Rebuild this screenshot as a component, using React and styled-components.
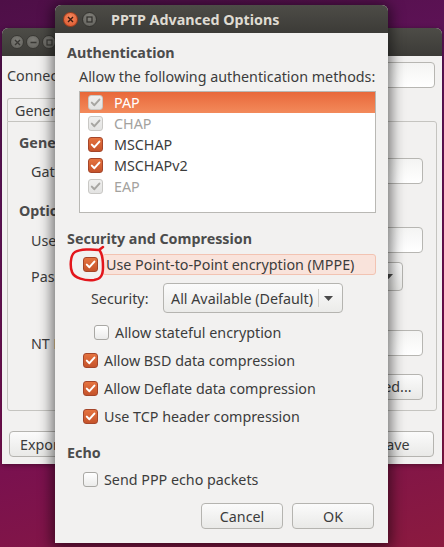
import styled, { createGlobalStyle, css } from "styled-components";

const GlobalStyle = createGlobalStyle`
  html, body { margin: 0; padding: 0; }
  body {
    width: 444px;
    height: 547px;
    overflow: hidden;
    font-family: "Noto Sans", "DejaVu Sans", sans-serif;
    font-size: 14.3px;
    color: #3c3c3c;
  }
`;

const Desktop = styled.div`
  position: relative;
  width: 444px;
  height: 547px;
  overflow: hidden;
  background: linear-gradient(165deg, #4e0f47 0%, #62135a 30%, #760f52 65%, #8b1a3f 100%);
`;

const Window = styled.div`
  position: absolute;
  left: ${p => p.$x}px;
  top: ${p => p.$y}px;
  width: ${p => p.$w}px;
  height: ${p => p.$h}px;
  background: #f2f1f0;
  border-radius: 6px 6px 0 0;
  display: flex;
  flex-direction: column;
  overflow: hidden;
  box-shadow: ${p => p.$active
    ? "0 2px 14px 3px rgba(0, 0, 0, 0.55)"
    : "0 1px 5px rgba(0, 0, 0, 0.4)"};
`;

const TitleBar = styled.div`
  height: 28px;
  flex-shrink: 0;
  display: flex;
  align-items: center;
  padding-left: 8px;
  gap: ${p => p.$gap}px;
  background: linear-gradient(#4d4c47, #3c3b37);
  color: #dfdbd2;
  font-weight: bold;
  font-size: 14.3px;
`;

const Title = styled.span`
  margin-left: 10px;
  white-space: nowrap;
`;

const WinButton = styled.span`
  width: 15px;
  height: 15px;
  box-sizing: border-box;
  border-radius: 50%;
  display: flex;
  align-items: center;
  justify-content: center;
  ${p => p.$close
    ? css`
        background: radial-gradient(circle at 50% 35%, #f68a5e, #d9532b);
        border: 1px solid #9e3d1d;
      `
    : css`
        background: radial-gradient(circle at 50% 35%, #85847e, #5d5c57);
        border: 1px solid #34332f;
      `}
`;

const DimButton = styled(WinButton)`
  width: 14px;
  height: 14px;
  background: radial-gradient(circle at 50% 35%, #7c7b76, #62615c);
  border: 1px solid #3a3935;
`;

/* ---------- generic widgets ---------- */

const Entry = styled.div`
  flex: 1;
  height: ${p => p.$h || 26}px;
  box-sizing: border-box;
  border: 1px solid #b7b6b2;
  border-radius: 4px;
  background: linear-gradient(#f4f4f3, #ffffff);
`;

const PushButton = styled.div`
  width: ${p => p.$w}px;
  height: 26px;
  box-sizing: border-box;
  border: 1px solid #b5b4b0;
  border-radius: 4px;
  background: linear-gradient(#fbfbfb, #e9e9e7);
  display: flex;
  align-items: center;
  justify-content: ${p => p.$align || "center"};
  padding: 0 ${p => p.$pad || 0}px;
  color: #3c3c3c;
  white-space: nowrap;
  overflow: hidden;
`;

const Combo = styled.div`
  width: ${p => p.$w}px;
  height: ${p => p.$h}px;
  box-sizing: border-box;
  border: 1px solid #b5b4b0;
  border-radius: 4px;
  background: linear-gradient(#fbfbfb, #ebebe9);
  display: flex;
  align-items: center;
  padding-left: 7px;
  white-space: nowrap;
`;

const ComboText = styled.span`
  flex: 1;
`;

const ComboSep = styled.span`
  width: 1px;
  align-self: stretch;
  margin: 5px 0;
  background: #cfceca;
`;

const ComboArrow = styled.span`
  width: 18px;
  margin-right: 5px;
  display: flex;
  justify-content: center;
`;

const Arrow = () => (
  <svg width="9" height="5" viewBox="0 0 9 5">
    <path d="M0 0 L9 0 L4.5 5 Z" fill="#4a4a4a" />
  </svg>
);

const checkStates = {
  on: css`
    background: linear-gradient(#e5733f, #c5532b);
    border: 1px solid #a5462a;
  `,
  off: css`
    background: linear-gradient(#ffffff, #ebebea);
    border: 1px solid #a9a8a4;
  `,
  dim: css`
    background: linear-gradient(#efefee, #e3e3e2);
    border: 1px solid #c9c8c5;
  `,
};

const CheckBox = styled.span`
  width: 15px;
  height: 15px;
  box-sizing: border-box;
  border-radius: 3px;
  flex-shrink: 0;
  display: flex;
  align-items: center;
  justify-content: center;
  ${p => checkStates[p.$state]}
`;

const Check = ({ state }) => (
  <CheckBox $state={state}>
    {state !== "off" && (
      <svg width="11" height="11" viewBox="0 0 11 11">
        <path
          d="M1.8 5.6 L4.4 8.2 L9.4 2.6"
          fill="none"
          stroke={state === "on" ? "#ffffff" : "#a7a6a2"}
          strokeWidth="2"
          strokeLinecap="round"
          strokeLinejoin="round"
        />
      </svg>
    )}
  </CheckBox>
);

/* ---------- background window ---------- */

const BackBody = styled.div`
  flex: 1;
  display: flex;
  flex-direction: column;
  padding: 6px 5px 0 5px;
`;

const BackRow = styled.div`
  display: flex;
  align-items: center;
  height: ${p => p.$h || 26}px;
  margin-top: ${p => p.$mt || 0}px;
  padding-left: ${p => p.$indent || 0}px;
  padding-right: ${p => p.$right || 0}px;
  justify-content: ${p => p.$justify || "flex-start"};
`;

const BackLabel = styled.span`
  width: ${p => p.$w}px;
  flex-shrink: 0;
  white-space: nowrap;
`;

const Notebook = styled.div`
  margin-top: 10px;
  display: flex;
  flex-direction: column;
`;

const Tab = styled.div`
  width: 92px;
  height: 23px;
  box-sizing: border-box;
  border: 1px solid #c5c4c0;
  border-bottom: none;
  border-radius: 3px 3px 0 0;
  padding-left: 7px;
  display: flex;
  align-items: center;
`;

const TabFrame = styled.div`
  height: 290px;
  box-sizing: border-box;
  border: 1px solid #c5c4c0;
  border-radius: 0 3px 3px 3px;
  padding: 11px 13px 0 11px;
  display: flex;
  flex-direction: column;
`;

const Bold = styled.div`
  font-weight: bold;
  line-height: 20px;
  color: #4c4c4c;
  margin-top: ${p => p.$mt || 0}px;
  white-space: nowrap;
`;

/* ---------- dialog ---------- */

const DialogBody = styled.div`
  flex: 1;
  display: flex;
  flex-direction: column;
  padding: 10px 12px 0 12px;
  position: relative;
`;

const Intro = styled.div`
  line-height: 20px;
  padding-left: 12px;
  margin-top: 4px;
  white-space: nowrap;
`;

const MethodList = styled.div`
  margin: 4px 0 0 12px;
  width: 297px;
  height: 122px;
  box-sizing: border-box;
  border: 1px solid #b9b8b4;
  background: #ffffff;
  display: flex;
  flex-direction: column;
`;

const MethodRow = styled.div`
  height: 21px;
  flex-shrink: 0;
  display: flex;
  align-items: center;
  gap: 11px;
  padding-left: 8px;
  color: ${p => (p.$selected ? "#ffffff" : p.$dim ? "#a3a29e" : "#3c3c3c")};
  ${p => p.$selected && css`
    background: linear-gradient(#e8683a, #f38a5b);
  `}
`;

const OptRow = styled.div`
  display: flex;
  align-items: center;
  height: ${p => p.$h || 20}px;
  margin-top: ${p => p.$mt || 0}px;
  padding-left: ${p => p.$indent || 16}px;
  gap: ${p => p.$gap ?? 6}px;
  white-space: nowrap;
`;

const Prelight = styled.div`
  flex: 1;
  align-self: stretch;
  display: flex;
  align-items: center;
  padding-left: 3px;
  box-sizing: border-box;
  border: 1px solid #f2c3b2;
  border-radius: 3px;
  background: #f9e3db;
`;

const FieldLabel = styled.span`
  width: 72px;
  flex-shrink: 0;
`;

const ButtonRow = styled.div`
  display: flex;
  justify-content: flex-end;
  gap: 9px;
  margin-top: 14px;
  padding-right: 2px;
`;

const Scribble = styled.svg`
  position: absolute;
  left: 11px;
  top: 211px;
  pointer-events: none;
`;

const methods = [
  { name: "PAP", state: "dim", selected: true },
  { name: "CHAP", state: "dim", dim: true },
  { name: "MSCHAP", state: "on" },
  { name: "MSCHAPv2", state: "on" },
  { name: "EAP", state: "dim", dim: true },
];

const options = [
  { label: "Allow BSD data compression", mt: 8 },
  { label: "Allow Deflate data compression", mt: 8 },
  { label: "Use TCP header compression", mt: 8 },
];

const XGlyph = ({ color }) => (
  <svg width="7" height="7" viewBox="0 0 7 7">
    <path d="M1 1 L6 6 M6 1 L1 6" stroke={color} strokeWidth="1.4" />
  </svg>
);

const MinGlyph = ({ color }) => (
  <svg width="7" height="7" viewBox="0 0 7 7">
    <path d="M0.5 3.5 L6.5 3.5" stroke={color} strokeWidth="1.4" />
  </svg>
);

const BoxGlyph = ({ color }) => (
  <svg width="7" height="7" viewBox="0 0 7 7">
    <rect x="1" y="1" width="5" height="5" fill="none" stroke={color} strokeWidth="1.2" />
  </svg>
);

export default function App() {
  return (
    <>
      <GlobalStyle />
      <Desktop>
        <Window $x={2} $y={28} $w={440} $h={436}>
          <TitleBar $gap={2}>
            <DimButton><XGlyph color="#3a3935" /></DimButton>
            <DimButton><MinGlyph color="#3a3935" /></DimButton>
            <DimButton><BoxGlyph color="#3a3935" /></DimButton>
          </TitleBar>
          <BackBody>
            <BackRow $right={2}>
              <BackLabel $w={140}>Connection name:</BackLabel>
              <Entry />
            </BackRow>
            <Notebook>
              <Tab>General</Tab>
              <TabFrame>
                <Bold>General</Bold>
                <BackRow $mt={5} $indent={12}>
                  <BackLabel $w={110}>Gateway:</BackLabel>
                  <Entry />
                </BackRow>
                <Bold $mt={17}>Optional</Bold>
                <BackRow $mt={6} $indent={12}>
                  <BackLabel $w={110}>User name:</BackLabel>
                  <Entry />
                </BackRow>
                <BackRow $mt={9} $h={29} $indent={12}>
                  <BackLabel $w={110}>Password:</BackLabel>
                  <Combo $w={262} $h={29}>
                    <ComboText />
                    <ComboSep />
                    <ComboArrow><Arrow /></ComboArrow>
                  </Combo>
                </BackRow>
                <BackRow $mt={13} />
                <BackRow $indent={12}>
                  <BackLabel $w={110}>NT Domain:</BackLabel>
                  <Entry />
                </BackRow>
                <BackRow $mt={18} $h={25} $justify="flex-end">
                  <PushButton $w={100}>Advanced...</PushButton>
                </BackRow>
              </TabFrame>
            </Notebook>
            <BackRow $mt={20} $justify="space-between">
              <PushButton $w={90} $align="flex-start" $pad={10} style={{ marginLeft: 2 }}>Export...</PushButton>
              <PushButton $w={80} style={{ marginRight: 3 }}>Save</PushButton>
            </BackRow>
          </BackBody>
        </Window>

        <Window $x={55} $y={5} $w={333} $h={538} $active>
          <TitleBar $gap={4}>
            <WinButton $close><XGlyph color="#3b1a10" /></WinButton>
            <WinButton><BoxGlyph color="#2f2e2a" /></WinButton>
            <Title>PPTP Advanced Options</Title>
          </TitleBar>
          <DialogBody>
            <Bold>Authentication</Bold>
            <Intro>Allow the following authentication methods:</Intro>
            <MethodList>
              {methods.map(m => (
                <MethodRow key={m.name} $selected={m.selected} $dim={m.dim}>
                  <Check state={m.state} />
                  {m.name}
                </MethodRow>
              ))}
            </MethodList>

            <Bold $mt={16}>Security and Compression</Bold>
            <OptRow $h={21} $mt={5} $gap={4}>
              <Check state="on" />
              <Prelight>Use Point-to-Point encryption (MPPE)</Prelight>
            </OptRow>
            <OptRow $h={30} $mt={8} $indent={24} $gap={0}>
              <FieldLabel>Security:</FieldLabel>
              <Combo $w={180} $h={30}>
                <ComboText>All Available (Default)</ComboText>
                <ComboSep />
                <ComboArrow><Arrow /></ComboArrow>
              </Combo>
            </OptRow>
            <OptRow $mt={9} $indent={27}>
              <Check state="off" />
              Allow stateful encryption
            </OptRow>
            {options.map(o => (
              <OptRow key={o.label} $mt={o.mt}>
                <Check state="on" />
                {o.label}
              </OptRow>
            ))}

            <Bold $mt={17}>Echo</Bold>
            <OptRow $mt={6}>
              <Check state="off" />
              Send PPP echo packets
            </OptRow>

            <ButtonRow>
              <PushButton $w={82}>Cancel</PushButton>
              <PushButton $w={82}>OK</PushButton>
            </ButtonRow>

            <Scribble width="42" height="40" viewBox="0 0 42 40">
              <path
                d="M37 3 L33 6 C26 5 14 5 9 8 C4 11 4 23 6 28 C8 34 19 37 28 36 C35 35 37 31 37 23 C37 16 36 10 34 7"
                fill="none"
                stroke="#e3161c"
                strokeWidth="2.5"
                strokeLinecap="round"
                strokeLinejoin="round"
              />
            </Scribble>
          </DialogBody>
        </Window>
      </Desktop>
    </>
  );
}
